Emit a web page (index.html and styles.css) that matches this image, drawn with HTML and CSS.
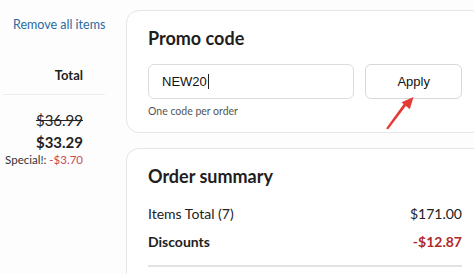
FILE: index.html
```html
<!DOCTYPE html>
<html>
<head>
<meta charset="utf-8">
<link rel="stylesheet" href="styles.css">
</head>
<body>
<div class="page">
  <aside class="cart-col">
    <a class="remove-all">Remove all items</a>
    <div class="total-head">Total</div>
    <div class="price-block">
      <div class="old-price">$36.99</div>
      <div class="new-price">$33.29</div>
      <div class="special">Special!: <span class="special-amt">-$3.70</span></div>
    </div>
  </aside>
  <main class="side-col">
    <section class="card promo">
      <h2 class="card-title">Promo code</h2>
      <div class="promo-row">
        <div class="promo-input">NEW20<span class="caret"></span></div>
        <button class="apply-btn">Apply</button>
      </div>
      <div class="helper">One code per order</div>
    </section>
    <section class="card summary">
      <h2 class="card-title">Order summary</h2>
      <div class="sum-row"><span>Items Total (7)</span><span>$171.00</span></div>
      <div class="sum-row bold"><span>Discounts</span><span class="neg">-$12.87</span></div>
      <div class="divider"></div>
    </section>
  </main>
</div>
<svg class="arrow" width="474" height="274" viewBox="0 0 474 274">
  <polygon points="386,128.5 388.2,129.2 407,104.6 404.6,102.8" fill="#e53935"/>
  <polygon points="413.5,97 401.6,102.2 409.8,109.2" fill="#e53935"/>
</svg>
</body>
</html>
```
FILE: styles.css
```css
html, body {
  margin: 0;
  padding: 0;
  overflow: hidden;
}
body {
  width: 474px;
  height: 274px;
  background: #fdfdfd;
  font-family: Lato, "Noto Sans", sans-serif;
  color: #1f1f1f;
  position: relative;
}
.page {
  display: flex;
  gap: 21px;
  align-items: flex-start;
  width: 474px;
  height: 274px;
  overflow: hidden;
}
.cart-col {
  width: 105px;
  flex: none;
  display: flex;
  flex-direction: column;
}
.remove-all {
  color: #2b6aa3;
  font-size: 12.5px;
  line-height: 16px;
  padding: 17px 0 0 13px;
  white-space: nowrap;
}
.total-head {
  font-weight: 700;
  font-size: 13px;
  line-height: 16px;
  text-align: right;
  padding: 34px 22px 11px 0;
  margin-left: 3px;
  border-bottom: 1px solid #eeeeee;
}
.price-block {
  display: flex;
  flex-direction: column;
  align-items: flex-end;
  padding: 15px 22px 0 0;
}
.old-price {
  font-size: 15px;
  line-height: 20px;
  text-decoration: line-through;
  color: #222;
}
.new-price {
  font-size: 15px;
  font-weight: 700;
  line-height: 22px;
  margin-top: 1px;
}
.special {
  font-size: 11.5px;
  line-height: 14px;
  color: #333;
  white-space: nowrap;
}
.special-amt {
  color: #c74a52;
}
.side-col {
  flex: none;
  width: 380px;
  display: flex;
  flex-direction: column;
  gap: 15px;
  padding-top: 10px;
}
.card {
  background: #ffffff;
  border: 1px solid #e6e6e6;
  border-radius: 13px;
  padding: 16px 22px 14px 21px;
  width: 314px;
}
.card-title {
  margin: 0;
  font-size: 18px;
  font-weight: 700;
  line-height: 22px;
  color: #1e1e1e;
}
.promo-row {
  display: flex;
  gap: 11px;
  margin-top: 15px;
}
.promo-input {
  width: 192px;
  height: 33px;
  border: 1px solid #dcdcdc;
  border-radius: 6px;
  box-sizing: content-box;
  padding-left: 13px;
  display: flex;
  align-items: center;
  font-family: "Liberation Sans", Arial, sans-serif;
  font-size: 13px;
  color: #111;
}
.caret {
  display: inline-block;
  width: 1px;
  height: 15px;
  background: #222;
  margin-left: 1px;
}
.apply-btn {
  width: 97px;
  height: 35px;
  border: 1px solid #d8d8d8;
  border-radius: 6px;
  background: #ffffff;
  font-family: "Liberation Sans", Arial, sans-serif;
  font-size: 13px;
  color: #111;
  padding: 0;
}
.helper {
  font-size: 10.5px;
  line-height: 14px;
  color: #555;
  margin-top: 5px;
}
.summary {
  padding-bottom: 0;
  border-bottom: none;
  border-radius: 13px 13px 0 0;
  height: 140px;
}
.sum-row {
  display: flex;
  justify-content: space-between;
  font-size: 14px;
  line-height: 18px;
  margin-top: 18px;
  color: #222;
}
.sum-row.bold {
  font-weight: 700;
  margin-top: 10px;
}
.neg {
  color: #b02a2a;
}
.divider {
  height: 2px;
  background: #e2e2e2;
  margin-top: 14px;
}
.arrow {
  position: absolute;
  left: 0;
  top: 0;
  pointer-events: none;
}
```
